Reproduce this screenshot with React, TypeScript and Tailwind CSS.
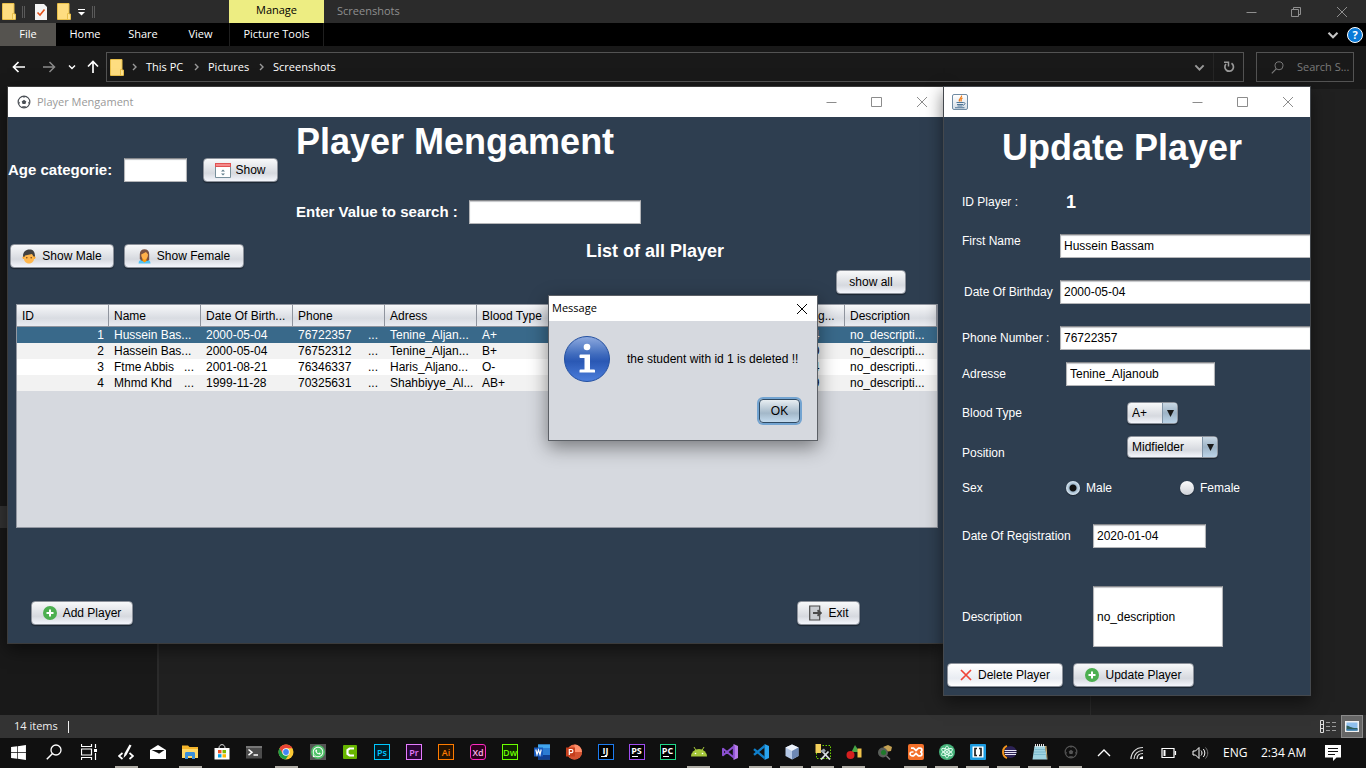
import type { ReactNode } from "react";
import { FaWindows, FaWhatsapp } from "react-icons/fa";

/* ---------- small drawings ---------- */

function FolderIcon() {
  return (
    <svg width="14" height="17" viewBox="0 0 14 17" aria-hidden="true">
      <path d="M1 1h11v10h1.500v5H1z" fill="#ffe38f" />
      <path d="M1 1h11v10h-1.500v5H1z" fill="#fedd80" />
      <path d="M.5.5h11.500v10.500h1.500v5.500H.5z" fill="none" stroke="#e8bf4a" />
      <path d="M10.500 16v-5.500H12" stroke="#e8bf4a" fill="none" />
    </svg>
  );
}

function BallIcon({ color = "#4a4f55", size = 14 }: { color?: string; size?: number }) {
  return (
    <svg width={size} height={size} viewBox="0 0 14 14" aria-hidden="true">
      <circle cx="7" cy="7" r="5.900" fill="none" stroke={color} strokeWidth="1.100" />
      <path d="M7 4.700l2.300 1.700-.9 2.600H5.600l-.9-2.600z" fill={color} />
      <path d="M4.500 1.300L7 2.700l2.500-1.400zM1 6l1.800 1.300-.6 2.500zM13 6l-1.800 1.300.6 2.500zM4.500 12.600l1-1.300h3l1 1.300z" fill={color} />
    </svg>
  );
}

function JavaIcon() {
  return (
    <svg width="14" height="14" viewBox="0 0 14 14" aria-hidden="true">
      <path d="M8.500.5C9.500 2.500 5 3.500 6.500 6.500M9.500 3C7.500 4 7.500 4.800 8.300 6.500" fill="none" stroke="#ee7d1c" strokeWidth="1.200" />
      <path d="M3.500 7.500h7M4 9.500h6M4.500 11h5M2 12.800h9.500" stroke="#4f7596" strokeWidth="1.100" />
      <path d="M10.500 7.500c2.500 0 1.500 2.500-.5 2.800" fill="none" stroke="#4f7596" />
    </svg>
  );
}

function Chevron({ color, dir, size = 8, weight = 1.4 }: { color: string; dir: "right" | "down" | "up"; size?: number; weight?: number }) {
  const d = { right: "M3 1l3 3-3 3", down: "M1 2.500l3 3 3-3", up: "M1 5.500l3-3 3 3" }[dir];
  return (
    <svg width={size} height={size} viewBox="0 0 8 8" aria-hidden="true">
      <path d={d} fill="none" stroke={color} strokeWidth={weight} />
    </svg>
  );
}

function PlusIcon() {
  return (
    <svg width="14" height="14" viewBox="0 0 14 14" aria-hidden="true">
      <circle cx="7" cy="7" r="7" fill="#4caf50" />
      <path d="M7 3.500v7M3.500 7h7" stroke="#fff" strokeWidth="2" />
    </svg>
  );
}

function MaleIcon() {
  return (
    <svg width="14" height="15" viewBox="0 0 14 15" aria-hidden="true">
      <circle cx="2" cy="8.500" r="1.500" fill="#ffa726" />
      <circle cx="12" cy="8.500" r="1.500" fill="#ffa726" />
      <path d="M2 4h10v6c0 2.500-2.500 4.500-5 4.500s-5-2-5-4.500z" fill="#ffb74d" />
      <path d="M1 7.500C1 3 3.500.5 7.500.5c3.500 0 5.500 2 5.500 7H11.500L10 5 3 6.500 2.300 8z" fill="#424242" />
      <circle cx="4.800" cy="8.800" r=".8" fill="#784719" />
      <circle cx="9.200" cy="8.800" r=".8" fill="#784719" />
    </svg>
  );
}

function FemaleIcon() {
  return (
    <svg width="13" height="15" viewBox="0 0 13 15" aria-hidden="true">
      <path d="M.5 14.500C.5 11.500 2.500 10 6.500 10s6 1.500 6 4.500z" fill="#4fc3f7" />
      <path d="M1.800 10V5c0-3 2-4.700 4.700-4.700S11.200 2 11.200 5v6L9 12H4z" fill="#7b5140" />
      <path d="M4.500 9h4v3l-2 1.500-2-1.500z" fill="#ff9800" />
      <path d="M3.200 5.500L8 3l2 2.500c0 3-1.500 5.200-3.400 5.200S3.200 8.500 3.200 5.500z" fill="#ffb04a" />
    </svg>
  );
}

function CalendarIcon() {
  return (
    <svg className="-mr-0.5" width="16" height="15" viewBox="0 0 16 15" aria-hidden="true">
      <path d="M.5.5h15v14H.5z" fill="#fff" stroke="#78909c" />
      <path d="M0 0h16v4H0z" fill="#e05252" />
      <path d="M1 1h14v2H1z" fill="#f48a8a" />
      <path d="M6 8.500l2-2 2 2zM6 10.500l2 2 2-2z" fill="#607d8b" />
    </svg>
  );
}

function ExitIcon() {
  return (
    <svg width="14" height="16" viewBox="0 0 14 16" aria-hidden="true">
      <path d="M1.700 1h10v14h-10z" fill="#c9ccd1" stroke="#4a4a4a" strokeWidth="1.200" />
      <path d="M5 8h7M9.500 5.200L12.800 8l-3.300 2.800" fill="none" stroke="#4a4a4a" strokeWidth="1.800" />
    </svg>
  );
}

function InfoIcon() {
  return (
    <svg width="46" height="46" viewBox="0 0 46 46" aria-hidden="true">
      <defs>
        <linearGradient id="info" x1="0" y1="0" x2="0" y2="1">
          <stop offset="0" stopColor="#8fabdf" />
          <stop offset=".4" stopColor="#3f6bbd" />
          <stop offset=".55" stopColor="#2a58b4" />
          <stop offset="1" stopColor="#4d7fdc" />
        </linearGradient>
      </defs>
      <circle cx="23" cy="23" r="22.500" fill="url(#info)" stroke="#2450a0" />
      <circle cx="23" cy="11" r="3.300" fill="#fff" />
      <path d="M16.500 18.500h9.500v15h4a1 1 0 0 1 1 1v2H15.500v-2a1 1 0 0 1 1-1h4V22h-4a1 1 0 0 1-1-1v-1.500a1 1 0 0 1 1-1z" fill="#fff" />
    </svg>
  );
}

type Glyph = "min" | "max" | "restore" | "close";
function WindowGlyph({ kind, color }: { kind: Glyph; color: string }) {
  const d = {
    min: "M.5 6.500h10",
    max: "M.5 1.500h10v9h-10z",
    restore: "M.5 3.500h7v7h-7zM2.500 3.500v-2h7v7h-2",
    close: "M1 1l10 10M11 1L1 11",
  }[kind];
  return (
    <svg width="12" height="12" viewBox="0 0 12 12" aria-hidden="true">
      <path d={d} fill="none" stroke={color} />
    </svg>
  );
}

function WindowControls({ color, middle }: { color: string; middle: Glyph }) {
  const items: [Glyph, string][] = [["min", "Minimize"], [middle, "Maximize"], ["close", "Close"]];
  return (
    <div className="flex self-stretch">
      {items.map(([kind, label]) => (
        <button key={label} aria-label={label} className="flex w-[45px] items-center justify-center">
          <WindowGlyph kind={kind} color={color} />
        </button>
      ))}
    </div>
  );
}

/* ---------- controls of the player application ---------- */

function AppButton({ children, className = "", bright = false }: { children: ReactNode; className?: string; bright?: boolean }) {
  const fill = bright
    ? "from-white via-[#e9ecf2] to-white"
    : "from-[#f8f9fa] via-[#d6d9df] to-[#f4f6fc]";
  return (
    <button
      className={`flex h-6 items-center justify-center gap-1.5 whitespace-nowrap rounded-[4px] border border-[#8d929b] bg-linear-to-b via-65% text-xs text-black shadow-[0_1px_1px_#1b2530] ${fill} ${className}`}
    >
      {children}
    </button>
  );
}

const fieldBase =
  "border border-[#b4b5b8] border-t-[#85878b] bg-white px-[3px] text-xs text-black shadow-[inset_0_1px_1px_#c4c5c8] outline-none";

function FormRow({ id, label, labelClass, className, children }: { id?: string; label: string; labelClass: string; className: string; children: ReactNode }) {
  return (
    <div className={`flex pl-[18px] ${className}`}>
      <label htmlFor={id} className={`shrink-0 whitespace-nowrap ${labelClass}`}>
        {label}
      </label>
      {children}
    </div>
  );
}

function Combo({ id, options, className }: { id: string; options: string[]; className: string }) {
  return (
    <div className={`relative h-[22px] ${className}`}>
      <select
        id={id}
        className="h-full w-full appearance-none rounded-[4px] border border-[#8d929b] bg-linear-to-b from-[#f8f9fa] via-[#d6d9df] via-65% to-[#f4f6fc] pl-1 text-xs text-black shadow-[0_1px_1px_#1b2530] outline-none"
      >
        {options.map((o) => (
          <option key={o}>{o}</option>
        ))}
      </select>
      <span className="pointer-events-none absolute inset-y-px right-px flex w-[15px] items-center justify-center rounded-r-[3px] border-l border-[#7f93a6] bg-linear-to-b from-[#c9d8e4] via-[#9db3c6] to-[#bcd4e8]">
        <svg width="7" height="7" viewBox="0 0 7 7" aria-hidden="true">
          <path d="M0 0h7L3.500 7z" fill="#1a1a1a" />
        </svg>
      </span>
    </div>
  );
}

function Radio({ label, checked = false, className = "" }: { label: string; checked?: boolean; className?: string }) {
  return (
    <label className={`flex items-center gap-1.5 ${className}`}>
      <input
        type="radio"
        name="sex"
        defaultChecked={checked}
        className="size-3.5 appearance-none rounded-full bg-linear-to-b from-[#fbfbfc] to-[#cfd2d8] shadow-[0_1px_1px_#1b2530] checked:bg-[radial-gradient(circle,#111_0_3px,#9fb8cc_4px,#dce8f2_7px)]"
      />
      {label}
    </label>
  );
}

/* ---------- player window ---------- */

const columns = ["ID", "Name", "Date Of Birth...", "Phone", "Adress", "Blood Type", "", "", "Date Of Reg...", "Description"];

const rows: string[][] = [
  ["1", "Hussein Bas...", "2000-05-04", "76722357|...", "Tenine_Aljan...", "A+", "", "", "2020-01-04", "no_descripti..."],
  ["2", "Hassein Bas...", "2000-05-04", "76752312|...", "Tenine_Aljan...", "B+", "", "", "2020-01-10", "no_descripti..."],
  ["3", "Ftme Abbis|...", "2001-08-21", "76346337|...", "Haris_Aljano...", "O-", "", "", "2020-01-04", "no_descripti..."],
  ["4", "Mhmd Khd|...", "1999-11-28", "70325631|...", "Shahbiyye_Al...", "AB+", "", "", "2020-01-09", "no_descripti..."],
];

const rowTone = ["bg-[#39698a] text-white", "bg-[#f2f2f2]", "bg-white", "bg-[#f2f2f2]"];

function PlayerTable() {
  return (
    <div className="ml-2 mr-1.5 mt-2.5 h-[224px] overflow-hidden border border-[#9297a1] bg-[#d6d9df]">
      <table className="w-full table-fixed border-separate border-spacing-0 text-xs text-black">
        <thead>
          <tr className="bg-linear-to-b from-[#f7f8fa] via-[#d9dce2] via-60% to-[#eceef3]">
            {columns.map((c, i) => (
              <th key={i} className="h-[22px] whitespace-nowrap border-b border-r border-[#8f949e] p-0 pl-[5px] text-left font-normal leading-4">
                {c}
              </th>
            ))}
          </tr>
        </thead>
        <tbody>
          {rows.map((r, i) => (
            <tr key={r[0]} className={`h-4 ${rowTone[i]}`}>
              {r.map((cell, j) => {
                const [text, rest] = cell.split("|");
                return (
                  <td key={j} className="whitespace-nowrap p-0 pl-[5px] pr-[5px] leading-4">
                    <div className={`flex ${j === 0 ? "justify-end" : "justify-between"}`}>
                      <span>{text}</span>
                      {rest && <span className="pr-0.5">{rest}</span>}
                    </div>
                  </td>
                );
              })}
            </tr>
          ))}
        </tbody>
      </table>
    </div>
  );
}

function PlayerWindow() {
  return (
    <section className="absolute left-[7px] top-[86px] w-[938px] border border-[#3b3b3b] bg-[#2e3e50] text-white shadow-[0_6px_16px_rgba(0,0,0,0.5)]">
      <header className="flex h-[30px] items-center bg-white pl-[9px] font-['Open_Sans',sans-serif] text-[11px] text-[#999]">
        <BallIcon />
        <span className="flex-1 pl-1.5">Player Mengament</span>
        <WindowControls color="#8c8c8c" middle="max" />
      </header>
      <div className="grid grid-cols-[288px_1fr]">
        <div className="flex items-start pt-[41px]">
          <label htmlFor="age" className="w-[116px] text-[15px] font-bold leading-6">Age categorie:</label>
          <input id="age" className={`h-6 w-[63px] ${fieldBase}`} />
          <AppButton className="ml-4 w-[75px]">
            <CalendarIcon />
            Show
          </AppButton>
        </div>
        <div className="pt-1">
          <h1 className="text-4xl font-bold leading-[42px]">Player Mengament</h1>
          <div className="mt-[37px] flex items-center">
            <label htmlFor="search" className="w-[173px] whitespace-nowrap text-[15px] font-bold leading-6">Enter Value to search :</label>
            <input id="search" className={`h-6 w-[172px] ${fieldBase}`} />
          </div>
        </div>
      </div>
      <div className="mt-5 grid grid-cols-[578px_1fr] items-start">
        <div className="flex gap-2.5 pl-0.5">
          <AppButton className="w-[104px]">
            <MaleIcon />
            Show Male
          </AppButton>
          <AppButton className="w-[120px]">
            <FemaleIcon />
            Show Female
          </AppButton>
        </div>
        <h2 className="text-lg font-bold leading-[14px]">List of all Player</h2>
      </div>
      <div className="mt-0.5 flex justify-end pr-[38px]">
        <AppButton className="w-[70px]">show all</AppButton>
      </div>
      <PlayerTable />
      <footer className="flex justify-between pb-[18px] pl-[23px] pr-[84px] pt-[73px]">
        <AppButton className="w-[102px]">
          <PlusIcon />
          Add Player
        </AppButton>
        <AppButton className="w-[63px]">
          <ExitIcon />
          Exit
        </AppButton>
      </footer>
    </section>
  );
}

/* ---------- update window ---------- */

function UpdateWindow() {
  return (
    <section className="absolute left-[943px] top-[86px] w-[368px] border border-[#44484d] bg-[#2e3e50] text-xs text-white shadow-[0_6px_16px_rgba(0,0,0,0.5)]">
      <header className="flex h-[30px] items-center justify-between bg-white pl-2">
        <span className="flex size-4 items-center justify-center rounded-[2px] border border-[#6f8ba3] bg-linear-to-b from-white to-[#d5dee6]">
          <JavaIcon />
        </span>
        <WindowControls color="#8c8c8c" middle="max" />
      </header>
      <h1 className="pr-2.5 pt-2.5 text-center text-4xl font-bold leading-[42px]">Update Player</h1>
      <form onSubmit={(e) => e.preventDefault()} className="pb-2">
        <FormRow label="ID Player :" labelClass="w-[104px]" className="mt-[21px] h-6 items-center">
          <output className="text-lg font-bold">1</output>
        </FormRow>
        <FormRow id="first" label="First Name" labelClass="w-[98px] leading-[14px]" className="mt-5 items-start">
          <input id="first" defaultValue="Hussein Bassam" className={`h-6 min-w-0 flex-1 border-r-0 ${fieldBase}`} />
        </FormRow>
        <FormRow id="birth" label="Date Of Birthday" labelClass="w-[98px] pl-0.5" className="mt-[22px] items-center">
          <input id="birth" defaultValue="2000-05-04" className={`h-6 min-w-0 flex-1 border-r-0 ${fieldBase}`} />
        </FormRow>
        <FormRow id="phone" label="Phone Number :" labelClass="w-[98px]" className="mt-[22px] items-center">
          <input id="phone" defaultValue="76722357" className={`h-6 min-w-0 flex-1 border-r-0 ${fieldBase}`} />
        </FormRow>
        <FormRow id="address" label="Adresse" labelClass="w-[104px]" className="mt-3 items-center">
          <input id="address" defaultValue="Tenine_Aljanoub" className={`h-6 w-[149px] ${fieldBase}`} />
        </FormRow>
        <FormRow id="blood" label="Blood Type" labelClass="w-[165px]" className="mt-4 items-center">
          <Combo id="blood" options={["A+", "B+", "O-", "AB+"]} className="w-[51px]" />
        </FormRow>
        <FormRow id="position" label="Position" labelClass="w-[165px] leading-[10px]" className="mt-3 items-end">
          <Combo id="position" options={["Midfielder", "Defender", "Goalkeeper"]} className="w-[91px]" />
        </FormRow>
        <div role="radiogroup" aria-label="Sex" className="mt-[18px] flex h-6 items-center pl-[18px]">
          <span className="w-[104px]">Sex</span>
          <Radio label="Male" checked className="w-[114px]" />
          <Radio label="Female" />
        </div>
        <FormRow id="registration" label="Date Of Registration" labelClass="w-[131px]" className="mt-6 items-center">
          <input id="registration" defaultValue="2020-01-04" className={`h-6 w-[113px] ${fieldBase}`} />
        </FormRow>
        <FormRow id="description" label="Description" labelClass="w-[131px]" className="mt-[38px] items-center">
          <input id="description" defaultValue="no_description" className={`h-[61px] w-[130px] ${fieldBase}`} />
        </FormRow>
        <div className="mt-4 flex gap-2.5 pl-[3px]">
          <AppButton bright className="w-[116px]">
            <svg width="12" height="12" viewBox="0 0 12 12" aria-hidden="true">
              <path d="M1 1l10 10M11 1L1 11" stroke="#f04438" strokeWidth="1.700" />
            </svg>
            Delete Player
          </AppButton>
          <AppButton className="w-[121px]">
            <PlusIcon />
            Update Player
          </AppButton>
        </div>
      </form>
    </section>
  );
}

/* ---------- message dialog ---------- */

function MessageDialog() {
  return (
    <section role="dialog" aria-label="Message" className="absolute left-[548px] top-[295px] w-[270px] border border-[#5c6066] bg-[#d6d9df] text-xs text-black shadow-[0_6px_18px_rgba(0,0,0,0.45)]">
      <header className="flex h-[25px] items-center justify-between bg-white pl-[3px] pr-[9px] font-['Open_Sans',sans-serif] text-[11px]">
        Message
        <button aria-label="Close dialog">
          <WindowGlyph kind="close" color="#000" />
        </button>
      </header>
      <div className="flex items-center gap-[17px] pl-[15px] pt-[15px]">
        <InfoIcon />
        <p>the student with id 1 is deleted !!</p>
      </div>
      <div className="flex justify-end pb-[17px] pr-[17px] pt-[17px]">
        <button className="h-6 w-[41px] rounded-[4px] border border-[#2f4a63] bg-linear-to-b from-[#e8eef2] via-[#a3b8c9] via-60% to-[#c4dbee] shadow-[0_0_0_2px_#73a4d1]">
          OK
        </button>
      </div>
    </section>
  );
}

/* ---------- explorer behind the windows ---------- */

function Explorer() {
  return (
    <main className="flex min-h-0 flex-1 flex-col font-['Open_Sans',sans-serif] text-[11px] text-white">
      <div className="flex h-[23px] shrink-0 items-center bg-[#2b2b2b] pr-0.5">
        <div className="flex w-[229px] items-center pl-[2px]">
          <FolderIcon />
          <span className="ml-1.5 h-3 w-[3px] border-x border-[#5a5a5a]" />
          <svg className="ml-2.5" width="12" height="16" viewBox="0 0 12 16" aria-hidden="true">
            <path d="M0 0h9l3 3v13H0z" fill="#f4f4f4" />
            <path d="M2.500 8.500L5 11l4.500-5.500" fill="none" stroke="#e2521b" strokeWidth="1.600" />
          </svg>
          <span className="ml-2.5"><FolderIcon /></span>
          <svg className="ml-1.5" width="9" height="8" viewBox="0 0 9 8" aria-hidden="true">
            <path d="M1 1.500h7" stroke="#fff" />
            <path d="M1 4h7L4.500 7.500z" fill="#fff" />
          </svg>
          <span className="ml-1.5 h-3 w-[3px] border-x border-[#5a5a5a]" />
        </div>
        <div className="flex h-full w-[95px] justify-center bg-[#eded82] leading-5 text-black">Manage</div>
        <span className="flex-1 pl-[13px] text-[#8f8f8f]">Screenshots</span>
        <WindowControls color="#8f8f8f" middle="restore" />
      </div>

      <nav className="flex h-[23px] shrink-0 items-center bg-black">
        <a href="#file" className="flex h-full w-14 items-center justify-center bg-[#55534f]">File</a>
        <a href="#home" className="w-[58px] text-center">Home</a>
        <a href="#share" className="w-[58px] text-center">Share</a>
        <a href="#view" className="w-[57px] text-center">View</a>
        <a href="#tools" className="flex h-full w-[95px] items-center justify-center border-x border-[#1f1f1f]">Picture Tools</a>
        <div className="flex flex-1 items-center justify-end gap-2 pr-[3px]">
          <Chevron dir="down" color="#c4c4c4" size={12} />
          <button className="flex size-4 items-center justify-center rounded-full border border-white bg-[#0a7ad8] font-bold leading-none" aria-label="Help">?</button>
        </div>
      </nav>

      <div className="flex h-[43px] shrink-0 items-start bg-[#191919] pt-1.5">
        <div className="flex h-[30px] w-[106px] items-center pl-3">
          <svg width="14" height="12" viewBox="0 0 14 12" aria-hidden="true">
            <path d="M13 6H1.500M6.500 1l-5 5 5 5" fill="none" stroke="#fff" strokeWidth="1.700" />
          </svg>
          <svg className="ml-4" width="14" height="12" viewBox="0 0 14 12" aria-hidden="true">
            <path d="M1 6h11.500M7.500 1l5 5-5 5" fill="none" stroke="#8a8a8a" strokeWidth="1.500" />
          </svg>
          <span className="ml-3"><Chevron dir="down" color="#fff" /></span>
          <svg className="ml-[11px]" width="12" height="14" viewBox="0 0 12 14" aria-hidden="true">
            <path d="M6 13V1.500M1 6.500l5-5 5 5" fill="none" stroke="#fff" strokeWidth="1.700" />
          </svg>
        </div>
        <div className="flex h-[30px] flex-1 items-center border border-[#535353] pl-[3px]">
          <FolderIcon />
          <div className="flex flex-1 items-center whitespace-nowrap pl-1.5">
            <Chevron dir="right" color="#9a9a9a" />
            <a href="#pc" className="w-[54px] pl-2">This PC</a>
            <Chevron dir="right" color="#9a9a9a" />
            <a href="#pictures" className="w-[57px] pl-2">Pictures</a>
            <Chevron dir="right" color="#9a9a9a" />
            <a href="#screenshots" className="pl-2">Screenshots</a>
          </div>
          <Chevron dir="down" color="#9a9a9a" size={11} />
          <span className="ml-2 flex h-full w-[30px] items-center justify-center border-l border-[#262626]">
            <svg width="12" height="12" viewBox="0 0 12 12" aria-hidden="true">
              <path d="M8.500 2.300A4.300 4.300 0 1 1 3 3" fill="none" stroke="#9a9a9a" strokeWidth="1.700" />
              <path d="M1 1.300h4.500v4.200" fill="none" stroke="#9a9a9a" strokeWidth="1.500" />
            </svg>
          </span>
        </div>
        <div className="ml-3 mr-3 flex h-[30px] w-[98px] items-center gap-[13px] border border-[#535353] pl-3.5 text-[#7a7a7a]">
          <svg className="shrink-0" width="13" height="13" viewBox="0 0 13 13" aria-hidden="true">
            <circle cx="8" cy="4.800" r="4" fill="none" stroke="#7a7a7a" />
            <path d="M5.200 7.800L.8 12.300" stroke="#7a7a7a" strokeWidth="1.200" />
          </svg>
          <span className="whitespace-nowrap">Search S...</span>
        </div>
      </div>

      <div className="flex min-h-0 flex-1 bg-[#202020]">
        <div className="w-[159px] border-r-2 border-[#2b2b2b] bg-[#191919] pt-[417px]">
          <div className="h-[22px] w-2 bg-[#333]" />
        </div>
        <div className="mr-[275px] flex-1 border-r border-[#2b2b2b]" />
      </div>

      <footer className="flex h-[23px] shrink-0 items-center bg-[#333] pl-3.5">
        <span className="text-[#eee]">14 items</span>
        <span className="ml-2.5 h-3 w-px bg-[#eee]" />
        <div className="flex flex-1 items-center justify-end self-stretch pr-[3px]">
          <svg className="mr-1" width="17" height="13" viewBox="0 0 17 13" aria-hidden="true">
            <path d="M.5.5h3v12h-3zM.5 4.500h3M.5 8.500h3" fill="none" stroke="#ddd" />
            <path d="M6 2.500h4M12 2.500h4M6 6.500h4M12 6.500h4M6 10.500h4M12 10.500h4" stroke="#999" />
          </svg>
          <span className="flex h-full w-[22px] items-center justify-center border border-[#8a8a8a] bg-[#666]">
            <svg width="14" height="11" viewBox="0 0 14 11" aria-hidden="true">
              <path d="M0 0h14v11H0z" fill="#f2f2f2" />
              <path d="M1.500 1.500h11v8h-11z" fill="#8fc0ee" />
              <path d="M1.500 4.500c3 .5 5 3 11 2.500v2.500h-11z" fill="#2f5f5a" />
              <path d="M1.500 8.300h11v1.200h-11z" fill="#3b82c4" />
            </svg>
          </span>
        </div>
      </footer>
    </main>
  );
}

/* ---------- taskbar ---------- */

function Badge({ text, className }: { text: string; className: string }) {
  return (
    <span className={`flex size-4 items-center justify-center border font-['Open_Sans',sans-serif] text-[9px] font-semibold leading-none ${className}`}>
      {text}
    </span>
  );
}

function IdeBadge({ text, className }: { text: string; className: string }) {
  return (
    <span className={`flex size-4 flex-col items-center border bg-black pt-px font-['Open_Sans',sans-serif] text-[9px] font-bold leading-[9px] text-white ${className}`}>
      {text}
      <span className="mt-px ml-0.5 h-px w-1.5 self-start bg-white" />
    </span>
  );
}

function Pic({ children }: { children: ReactNode }) {
  return (
    <svg width="16" height="16" viewBox="0 0 16 16" aria-hidden="true">
      {children}
    </svg>
  );
}

const apps: { name: string; open?: boolean; icon: ReactNode }[] = [
  {
    name: "Code editor", open: true,
    icon: <Pic><path d="M4.500 9l-3.500 3 3.500 3M11.500 9l3.500 3-3.500 3" fill="none" stroke="#fff" strokeWidth="1.700" /><path d="M5.500 14l1-4.500L11.500.5l2 1L8.500 11z" fill="#fff" /></Pic>,
  },
  {
    name: "Mail",
    icon: <Pic><path d="M0 6l8-5 8 5v9H0z" fill="#fff" /><path d="M1.500 6h13L9 9.800 8 9z" fill="#101010" /></Pic>,
  },
  {
    name: "File Explorer", open: true,
    icon: <Pic><path d="M0 1.500h6L7.500 3H16v11H0z" fill="#f5b52a" /><path d="M0 5h16v9H0z" fill="#ffd866" /><path d="M3 15V9.500C3 8.500 3.500 8 4.500 8h7c1 0 1.500.5 1.500 1.500V15h-3v-3H6v3z" fill="#3a8fd9" /></Pic>,
  },
  {
    name: "Store",
    icon: <Pic><path d="M5 4c0-4.500 6-4.500 6 0" fill="none" stroke="#ddd" /><path d="M.5 4h15v11.500H.5z" fill="#fff" /><path d="M4 6h3.500v3.300H4z" fill="#f25022" /><path d="M8.500 6H12v3.300H8.500z" fill="#7fba00" /><path d="M4 10.200h3.500v3.300H4z" fill="#00a4ef" /><path d="M8.500 10.200H12v3.300H8.500z" fill="#ffb900" /></Pic>,
  },
  {
    name: "Terminal",
    icon: <Pic><path d="M0 2h16v12.500H0z" fill="#4c4c4c" /><path d="M0 2h16v2H0z" fill="#777" /><path d="M2.500 5.500L6 8.300l-3.500 2.800M7.500 11h4.500" fill="none" stroke="#fff" strokeWidth="1.500" /></Pic>,
  },
  {
    name: "Chrome", open: true,
    icon: <Pic><circle cx="8" cy="8" r="7.500" fill="#fcc934" /><path d="M1.500 4.300A7.500 7.500 0 0 1 14.500 4.300H8L4.800 9.900z" fill="#ea4335" /><path d="M1.500 4.200A7.500 7.500 0 0 0 7.600 15.500L11.200 9.900H4.800z" fill="#1e9e48" /><circle cx="8" cy="8" r="3.700" fill="#fff" /><circle cx="8" cy="8" r="2.900" fill="#4285f4" /></Pic>,
  },
  {
    name: "WhatsApp",
    icon: (
      <span className="flex size-4 items-center justify-center bg-[#555]">
        <span className="flex size-3.5 items-center justify-center rounded-full bg-[#4fc268]"><FaWhatsapp size={12} color="#fff" /></span>
      </span>
    ),
  },
  {
    name: "Camtasia",
    icon: <Pic><rect x="1" y="1" width="14" height="14" rx="1" fill="#67b500" /><path d="M12 4.500H7.500L5.500 6v4l2 1.500H12" fill="none" stroke="#fff" strokeWidth="2.200" /></Pic>,
  },
  { name: "Photoshop", icon: <Badge text="Ps" className="border-[#00c8ff] bg-[#001d26] text-[#00c8ff]" /> },
  { name: "Premiere", icon: <Badge text="Pr" className="border-[#e57cff] bg-[#2a0634] text-[#e57cff]" /> },
  { name: "Illustrator", icon: <Badge text="Ai" className="border-[#ff7c00] bg-[#261300] text-[#ff7c00]" /> },
  { name: "XD", icon: <Badge text="Xd" className="rounded-[3px] border-[#ff2bc2] bg-[#2e001e] text-[#ffb0e8]" /> },
  { name: "Dreamweaver", icon: <Badge text="Dw" className="border-[#6bff00] bg-[#0e2600] text-[#6bff00]" /> },
  {
    name: "Word",
    icon: <Pic><path d="M4 .5h12v15H4z" fill="#2b7cd3" /><path d="M4 .5h12V4H4z" fill="#41a5ee" /><path d="M4 11h12v4.500H4z" fill="#103f91" /><path d="M0 3.500h9v9H0z" fill="#185abd" /><path d="M1.800 5.500L3 10.500l1.500-4.500L6 10.500l1.200-5" fill="none" stroke="#fff" strokeWidth="1.200" /></Pic>,
  },
  {
    name: "PowerPoint",
    icon: <Pic><circle cx="8.500" cy="8" r="7.500" fill="#ed6c47" /><path d="M8.500.5A7.500 7.500 0 0 1 16 8H8.500z" fill="#ff8f6b" /><path d="M1 8h15a7.500 7.500 0 0 1-15 0z" fill="#d35230" /><path d="M0 3.500h9v9H0z" fill="#c43e1c" /><path d="M3.300 11V5.500h2a1.500 1.500 0 0 1 0 3.200h-2" fill="none" stroke="#fff" strokeWidth="1.200" /></Pic>,
  },
];

const tools: { name: string; open?: boolean; icon: ReactNode }[] = [
  { name: "IntelliJ", icon: <IdeBadge text="IJ" className="border-[#1d7cf0]" /> },
  { name: "PhpStorm", icon: <IdeBadge text="PS" className="border-[#a04df0]" /> },
  { name: "PyCharm", icon: <IdeBadge text="PC" className="border-[#21d789]" /> },
  {
    name: "Android", open: true,
    icon: <Pic><path d="M0 12.500a8 7.500 0 0 1 16 0z" fill="#a4c639" /><path d="M3 3l2 3.500M13 3l-2 3.500" stroke="#a4c639" /><circle cx="4.500" cy="9.500" r=".8" fill="#fff" /><circle cx="11.500" cy="9.500" r=".8" fill="#fff" /></Pic>,
  },
  {
    name: "Visual Studio",
    icon: <Pic><path d="M11.500 0L16 2v12l-4.500 2z" fill="#b77be8" /><path d="M11.800 2.500v11L1 4.800v6.400z" fill="none" stroke="#8a4fd0" strokeWidth="2" strokeLinejoin="round" /></Pic>,
  },
  {
    name: "VS Code", open: true,
    icon: <Pic><path d="M11.500 0L16 2v12l-4.500 2z" fill="#2aa4ee" /><path d="M11.800 1.800L1 10.800M1 5.200l10.800 9" stroke="#0f7fca" strokeWidth="2.400" fill="none" /></Pic>,
  },
  {
    name: "NetBeans", open: true,
    icon: <Pic><path d="M8 .5l6.500 3v8.500L8 15.500 1.500 12V3.500z" fill="#b5c8e6" /><path d="M8 .5l6.500 3L8 7 1.500 3.500z" fill="#eef3fb" /><path d="M8 7l6.500-3.500V12L8 15.500z" fill="#6d88b5" /></Pic>,
  },
  {
    name: "Workbench", open: true,
    icon: <Pic><path d="M1.500 1.500h14v13h-14z" fill="none" stroke="#6fd400" strokeDasharray="1.500 1.500" /><path d="M.5 0h5.500v9H.5z" fill="#f3cf5b" /><path d="M6 15.500l7.500-8M7 7l8 8.500" stroke="#d9dde3" strokeWidth="1.800" /><path d="M5 7l4-2.500 2 2.500-3.500 2z" fill="#9aa1a9" /></Pic>,
  },
  {
    name: "Shapes", open: true,
    icon: <Pic><path d="M9 1l4.500 7h-8z" fill="#46a546" /><circle cx="4.500" cy="11" r="4" fill="#d61f1f" /><path d="M11.500 4.500H15.500v9h-4z" fill="#f0c24a" /></Pic>,
  },
  {
    name: "Inspector",
    icon: <Pic><circle cx="6" cy="8.500" r="5" fill="#5a5f5a" /><circle cx="6.500" cy="8.500" r="2.500" fill="#1e7a2a" /><path d="M6 3l5-2 4 2-1 4-3 .5L9 5z" fill="#c5a254" /><path d="M9.500 12l3.500 3.500" stroke="#777" strokeWidth="1.500" /></Pic>,
  },
  {
    name: "XAMPP", open: true,
    icon: <Pic><rect width="16" height="16" rx="2" fill="#f3702a" /><path d="M3 4.200h2.500L8 6.500l2.500-2.300H12a1.900 1.900 0 0 1 0 3.800 1.900 1.900 0 0 1 0 3.800h-1.500L8 9.500l-2.500 2.300H4A1.900 1.900 0 0 1 4 8l1.500 0" fill="none" stroke="#fff" strokeWidth="1.700" /></Pic>,
  },
  {
    name: "Atom", open: true,
    icon: <Pic><circle cx="8" cy="8" r="8" fill="#46b37b" /><g fill="none" stroke="#e8fff2" strokeWidth=".9"><ellipse cx="8" cy="8" rx="2.200" ry="6" /><ellipse cx="8" cy="8" rx="2.200" ry="6" transform="rotate(60 8 8)" /><ellipse cx="8" cy="8" rx="2.200" ry="6" transform="rotate(-60 8 8)" /></g><circle cx="8" cy="8" r="1" fill="#fff" /></Pic>,
  },
  {
    name: "Brackets", open: true,
    icon: <Pic><rect width="16" height="16" rx="1" fill="#1c9be0" /><path d="M2.500 2.500h11v11h-11z" fill="#fff" /><path d="M7 4.500H5v7h2M9 4.500h2v7H9" fill="none" stroke="#222" strokeWidth="1.700" /></Pic>,
  },
  {
    name: "Eclipse", open: true,
    icon: <Pic><path d="M6 2a6.500 6.500 0 0 0 0 12" fill="none" stroke="#f0941f" strokeWidth="2" /><circle cx="9.500" cy="8" r="6" fill="#2c2255" /><path d="M3.500 6.500h12M3.500 8.500h12M4 10.500h11" stroke="#e6e4f4" strokeWidth="1.100" /></Pic>,
  },
  {
    name: "Notepad", open: true,
    icon: <Pic><path d="M2.500 2H13l2 13.500H.5z" fill="#9fd3e0" /><path d="M13 2h1.500l1 13.500H15z" fill="#d8b878" /><path d="M2.500 5.500H13M2 8h11.500M1.700 10.500h12" stroke="#6fb0c4" strokeWidth=".7" /><path d="M3.500 0v3M5.500 0v3M7.500 0v3M9.500 0v3M11.500 0v3" stroke="#e8e8e8" /></Pic>,
  },
  { name: "Player Mengament", open: true, icon: <BallIcon color="#555" /> },
];

function TaskButton({ name, open, icon, className }: { name: string; open?: boolean; icon: ReactNode; className: string }) {
  return (
    <button aria-label={name} className={`flex shrink-0 flex-col items-center ${className}`}>
      <span className="flex h-7 w-full items-center justify-center">{icon}</span>
      {open && <span className="h-0.5 w-[23px] bg-[#b0ada6]" />}
    </button>
  );
}

function Taskbar() {
  return (
    <footer className="flex h-[30px] shrink-0 bg-[#101010] font-['Open_Sans',sans-serif] text-xs text-white">
      <TaskButton name="Start" className="w-9" icon={<FaWindows size={17} />} />
      <TaskButton
        name="Search"
        className="w-9"
        icon={<Pic><circle cx="10" cy="6" r="5" fill="none" stroke="#fff" strokeWidth="1.300" /><path d="M6.500 9.500L.8 15.300" stroke="#fff" strokeWidth="1.500" /></Pic>}
      />
      <TaskButton
        name="Task view"
        className="w-[38px] pr-1"
        icon={<Pic><path d="M.5 0v2.500h10V0M.5 16v-2.500h10V16M.5 5h10v6H.5zM14.500 0v4M14.500 9v7" fill="none" stroke="#fff" strokeWidth="1.200" /><path d="M13 5h3v3h-3z" fill="#fff" /></Pic>}
      />
      {apps.map((a) => (
        <TaskButton key={a.name} {...a} className="w-8" />
      ))}
      {tools.map((a) => (
        <TaskButton key={a.name} {...a} className="w-[31px]" />
      ))}
      <div className="flex flex-1 items-center justify-end">
        <Chevron dir="up" color="#fff" size={16} weight={0.7} />
        <svg className="ml-[18px]" width="15" height="14" viewBox="0 0 15 14" aria-hidden="true">
          <g fill="none" stroke="#ddd" strokeWidth="1.200">
            <path d="M1 13C1 6.500 6 1.500 13 1.500" />
            <path d="M4 13c0-5 4-8.500 9-8.500" />
            <path d="M7 13c0-3.500 2.500-5.500 6-5.500" />
          </g>
          <path d="M9.500 13c0-2 1.500-2.800 3.500-2.800V13z" fill="#fff" />
        </svg>
        <svg className="ml-4" width="16" height="12" viewBox="0 0 16 12" aria-hidden="true">
          <path d="M1 1.500h12v9H1zM14.500 4v4" fill="none" stroke="#fff" strokeWidth="1.200" />
          <path d="M2.500 3H4.500v6h-2z" fill="#fff" />
        </svg>
        <svg className="ml-[15px]" width="17" height="14" viewBox="0 0 17 14" aria-hidden="true">
          <path d="M1 5h2.500L7 1.500v11L3.500 9H1z" fill="none" stroke="#fff" />
          <path d="M9 4.500c1.300 1.500 1.300 3.500 0 5M11.300 3c2 2.500 2 5.500 0 8" fill="none" stroke="#fff" />
          <path d="M13.500 1.500c3 3.500 3 7.500 0 11" fill="none" stroke="#777" />
        </svg>
        <span className="ml-3.5 w-[25px]">ENG</span>
        <span className="ml-[13px] w-[46px] whitespace-nowrap">2:34 AM</span>
        <svg className="ml-[18px] mr-[25px]" width="16" height="16" viewBox="0 0 16 16" aria-hidden="true">
          <path d="M0 0h16v12.500h-4.500L8 16v-3.500H0z" fill="#fff" />
          <path d="M3 3.500h10M3 6.500h10M3 9.500h7" stroke="#101010" />
        </svg>
      </div>
    </footer>
  );
}

export default function App() {
  return (
    <div className="relative flex h-screen flex-col overflow-hidden bg-[#202020] font-['Liberation_Sans',Arial,sans-serif]">
      <Explorer />
      <Taskbar />
      <PlayerWindow />
      <UpdateWindow />
      <MessageDialog />
    </div>
  );
}
